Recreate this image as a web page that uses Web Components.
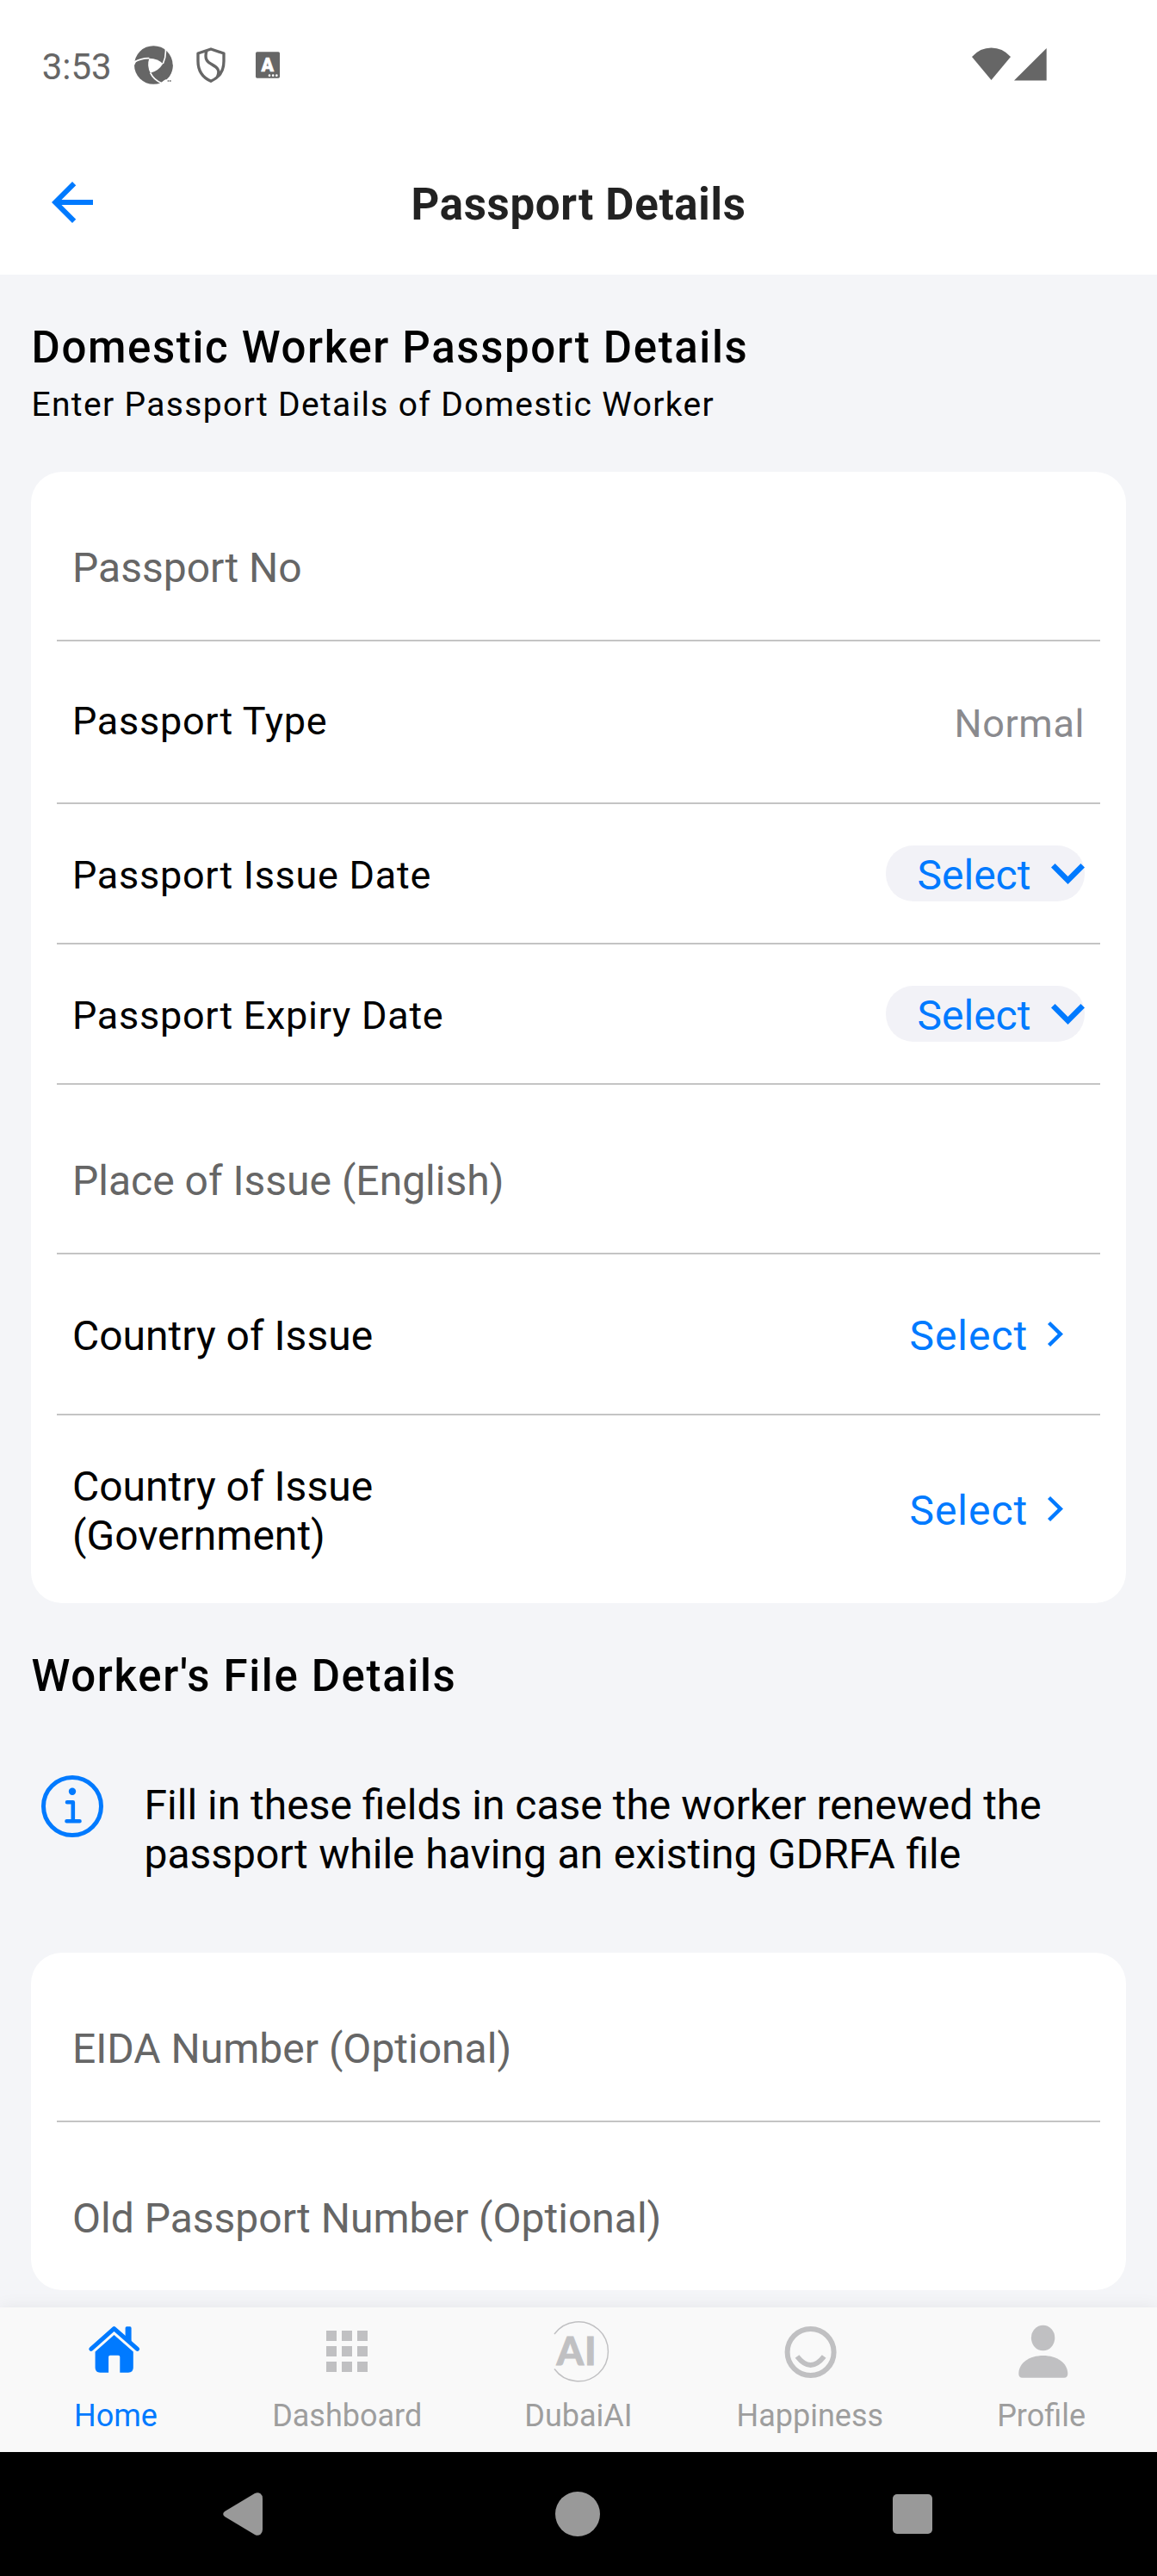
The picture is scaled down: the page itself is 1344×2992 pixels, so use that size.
<!DOCTYPE html>
<html lang="en">
<head>
<meta charset="utf-8">
<title>Passport Details</title>
<style>
html,body{margin:0;padding:0}
body{width:1344px;height:2992px;overflow:hidden;background:#f4f5f8;font-family:Roboto,"Noto Sans",sans-serif;color:#000}
</style>
</head>
<body>
<passport-app></passport-app>
<script>
const define = (name, html) => {
  const t = document.createElement('template');
  t.innerHTML = html;
  customElements.define(name, class extends HTMLElement {
    constructor() {
      super();
      this.attachShadow({mode: 'open'}).append(t.content.cloneNode(true));
    }
  });
};

/* Android status bar */
define('status-bar', `
<style>
:host{display:flex;align-items:flex-start;height:150px;background:#fff;color:#666;box-sizing:border-box;padding-left:48.7px}
.time{font-size:42px;line-height:49px;padding-top:53px;width:107.3px}
svg{display:block;flex:none;fill:#666}
.spacer{flex:1}
</style>
<span class="time">3:53</span>
<svg style="margin-top:53px" width="45" height="45" viewBox="469 159 135 135">
  <circle cx="536" cy="226.500" r="67"/>
  <path d="M566 159 L606 159 L606 184 L581 174Z M469 214 L478 209 L466 234Z M552 296 L574 279 L606 260 L606 296Z" fill="#fff"/>
  <path d="M603 226A67 67 0 0 1 582 277L570 277L560 240Z"/>
  <path d="M521 203Q552 204 569 222Q553 248 525 254Q512 229 521 203Z" fill="#fff"/>
  <path d="M569 222Q582 194 577 160M521 203Q493 202 469 217M525 254Q537 279 566 291" fill="none" stroke="#fff" stroke-width="5"/>
  <path d="M585 280h5v4h-5zM592 280h5v4h-5z"/>
</svg>
<svg style="margin:55px 0 0 27px" width="34" height="41" viewBox="684 164 102 123">
  <path d="M735 170L690 185V212C690 250 708 270 735 282C762 270 780 250 780 212V185ZM720 176C714 196 716 208 728 217C748 231 772 236 757 268" fill="none" stroke="#666" stroke-width="10" stroke-linejoin="round"/>
</svg>
<svg style="margin:60px 0 0 35px" width="28" height="31" viewBox="891 180 84 93">
  <rect x="891" y="181" width="84" height="91" rx="5"/>
  <text x="932.500" y="249" text-anchor="middle" font-family="Roboto" font-weight="900" font-size="64" fill="#fff" stroke="#fff" stroke-width="2" stroke-linejoin="round">A</text>
  <circle cx="939" cy="263" r="4" fill="#fff"/><circle cx="951.500" cy="263" r="4" fill="#fff"/><circle cx="964" cy="263" r="4" fill="#fff"/>
</svg>
<span class="spacer"></span>
<svg style="margin:55px 4px 0 0" width="45" height="38" viewBox="0 0 45 38"><path d="M0 11Q9.500 .6 22.500 .6T45 11L22.500 38Z"/></svg>
<svg style="margin:56px 128.300px 0 0" width="37.700" height="37.500" viewBox="0 0 37.700 37.500"><path d="M37.700 0V37.500H0Z"/></svg>
`);

/* Screen header with back arrow */
define('app-header', `
<style>
:host{display:grid;grid-template-columns:168px 1fr 168px;height:169px;background:#fff}
svg{margin:61px 0 0 60px;display:block}
h1{margin:0;padding-top:58px;text-align:center;font-size:51px;line-height:59px;font-weight:700;letter-spacing:.7px;color:#222}
</style>
<svg width="48" height="48" viewBox="4 4 16 16"><path fill="#007aff" d="M20 11H7.830l5.590-5.590L12 4l-8 8 8 8 1.410-1.410L7.830 13H20v-2z"/></svg>
<h1><slot></slot></h1>
`);

define('form-card', `
<style>
:host{display:block;margin:0 36px;background:#fff;border-radius:36px}
::slotted(:not(:last-child)){--line:2px}
</style><slot></slot>
`);

/* One row: --h row height, --lt offset of label, --rt offset of the value */
define('form-row', `
<style>
:host{display:block;padding:0 30px}
.row{display:flex;justify-content:space-between;align-items:flex-start;height:var(--h);padding:0 18px;box-sizing:border-box;overflow:hidden}
hr{margin:0;border:0;height:var(--line,0px);background:#c4c4c4}
.label{padding-top:var(--lt);font-size:48px;line-height:57px}
:host([kind=hint]) .label{color:#666}
:host([kind=small]) .label{font-size:45px;line-height:53px;letter-spacing:.72px}
::slotted([slot=value]){margin-top:var(--rt)!important}
</style>
<div class="row"><div class="label"><slot></slot></div><slot name="value"></slot></div><hr>
`);

define('plain-value', `
<style>:host{display:block;font-size:45px;line-height:53px;letter-spacing:.6px;color:#8a8a8e}</style><slot></slot>
`);

define('date-pill', `
<style>
:host{display:flex;align-items:flex-start;width:231px;height:65px;border-radius:32px;background:#f2f2f7;color:#007aff;font-size:48px;line-height:57px;box-sizing:border-box;padding:6px 0 0 36.500px}
span{width:155.500px}
svg{margin-top:15px;flex:none}
</style>
<span><slot></slot></span><svg width="39" height="24" viewBox="0 0 39 24"><path d="M4.600 0L19.500 14.900L34.400 0L39 4.600L19.500 24L0 4.600Z" fill="#007aff"/></svg>
`);

define('nav-select', `
<style>
:host{display:flex;align-items:flex-start;color:#007aff;font-size:48px;line-height:57px;letter-spacing:.95px;padding-right:25px}
span{width:160.500px}
svg{margin-top:12px;flex:none}
</style>
<span><slot></slot></span><svg width="18" height="29" viewBox="0 0 18 29"><path d="M3.100 0L18 14.500L3.100 29L0 26L11.700 14.500L0 3Z" fill="#007aff"/></svg>
`);

define('section-title', `
<style>:host{display:block;padding-left:36.500px;font-size:51px;line-height:59px;font-weight:500;letter-spacing:1.630px}</style><slot></slot>
`);

define('section-note', `
<style>:host{display:block;padding-left:36.500px;font-size:39px;line-height:46px;letter-spacing:1.330px}</style><slot></slot>
`);

define('info-note', `
<style>
:host{display:flex;align-items:flex-start;padding:0 48px}
svg{flex:none;display:block}
p{margin:6px 0 0 47.500px;font-size:48px;line-height:57px;white-space:nowrap}
</style>
<svg width="72" height="72" viewBox="0 0 72 72" fill="none" stroke="#007aff" stroke-linecap="round" stroke-linejoin="round">
<circle cx="36" cy="36" r="33.500" stroke-width="5"/><circle cx="36" cy="18.700" r="4.200" fill="#007aff" stroke="none"/>
<path d="M30 31.300H36.800V53.300M29.500 53.300H44.500" stroke-width="4.600"/></svg>
<p><slot></slot></p>
`);

define('tab-item', `
<style>
:host{display:flex;flex-direction:column;align-items:center;flex:1;color:#9e9e9e;font-size:36px;line-height:42px}
:host([active]){color:#007aff}
</style>
<slot name="icon"></slot><span><slot></slot></span>
`);

define('tab-bar', `
<style>
:host{display:flex;height:168px;background:#f9f9f9;box-shadow:0 0 18px rgba(0,0,0,.07)}
svg{display:block;fill:#c0c0c2;overflow:visible}
</style>
<tab-item active><svg slot="icon" width="80" height="105" viewBox="0 0 80 105" style="fill:#007aff">
  <path d="M11.800 48.300L38.500 24.700L65.600 48.300" fill="none" stroke="#007aff" stroke-width="5" stroke-linecap="round" stroke-linejoin="round"/>
  <path d="M51.600 24Q51.600 22.300 53.300 22.300H57Q58.600 22.300 58.600 24V43L51.600 37Z"/>
  <path d="M38.500 32L60.800 51.500V70Q60.800 75.700 55 75.700H45.300V57.500Q45.300 55.700 43.500 55.700H34Q32.100 55.700 32.100 57.500V75.700H22.300Q16.600 75.700 16.600 70V51.500Z"/>
</svg>Home</tab-item>
<tab-item><svg slot="icon" width="80" height="105" viewBox="0 0 80 105"><path d="M16 27h12v12h-12zM34 27h12v12h-12zM52 27h12v12h-12zM16 45h12v12h-12zM34 45h12v12h-12zM52 45h12v12h-12zM16 63h12v12h-12zM34 63h12v12h-12zM52 63h12v12h-12z"/></svg>Dashboard</tab-item>
<tab-item><svg slot="icon" width="80" height="105" viewBox="0 0 80 105">
  <path d="M12 31A34.500 34.500 0 1 1 12 71.500" fill="none" stroke="#c0c0c2" stroke-width="1.400"/>
  <text x="14.500" y="66.500" font-family="Lato" font-weight="900" font-size="45" letter-spacing="1" stroke="#c0c0c2" stroke-width=".8">AI</text></svg>DubaiAI</tab-item>
<tab-item><svg slot="icon" width="80" height="105" viewBox="0 0 80 105"><g fill="none" stroke="#c0c0c2" stroke-width="6"><circle cx="40.600" cy="52" r="27"/><path d="M25 57Q40.600 77 56.200 57"/></g></svg>Happiness</tab-item>
<tab-item><svg slot="icon" width="80" height="105" viewBox="0 0 80 105"><ellipse cx="41.600" cy="35.500" rx="13.700" ry="14.700"/><path d="M13.300 77C13.300 64.500 26 56 41.700 56S70.300 64.500 70.300 77Q70.300 81.800 66 81.800H17.500Q13.300 81.800 13.300 77Z"/></svg>Profile</tab-item>
`);

define('system-nav', `
<style>:host{display:flex;justify-content:space-between;align-items:center;height:144px;background:#000;box-sizing:border-box;padding:0 261px 0 259px}svg{fill:#999}</style>
<svg width="46" height="50" viewBox="0 0 46 50"><path d="M2 22L37 1Q40.500-.8 43.500 1.200Q46 3 46 7V43Q46 47 43.500 48.800Q40.500 50.800 37 49L2 28Q-1.600 25 2 22Z"/></svg>
<svg width="52" height="52" viewBox="0 0 52 52"><circle cx="26" cy="26" r="26"/></svg>
<svg width="46" height="46" viewBox="0 0 46 46"><rect width="46" height="46" rx="5"/></svg>
`);

define('passport-app', `
<style>
:host{display:flex;flex-direction:column;width:1344px;height:2992px}
main{flex:1;min-height:0;overflow:hidden;background:#f4f5f8;padding-top:55px}
section-note{margin-top:14px;margin-bottom:55px}
.second{margin-top:55px;margin-bottom:86px}
info-note{margin-bottom:86px;height:120px}
.wide{word-spacing:.78px}
tab-bar{position:relative}
</style>
<status-bar></status-bar>
<app-header>Passport Details</app-header>
<main>
  <section-title>Domestic Worker Passport Details</section-title>
  <section-note>Enter Passport Details of Domestic Worker</section-note>
  <form-card>
    <form-row kind="hint" style="--h:195px;--lt:83px">Passport No</form-row>
    <form-row kind="small" style="--h:187px;--lt:66px;--rt:69px">Passport Type<plain-value slot="value">Normal</plain-value></form-row>
    <form-row kind="small" style="--h:161px;--lt:56px;--rt:48px">Passport Issue Date<date-pill slot="value">Select</date-pill></form-row>
    <form-row kind="small" style="--h:161px;--lt:56px;--rt:48px">Passport Expiry Date<date-pill slot="value">Select</date-pill></form-row>
    <form-row kind="hint" style="--h:195px;--lt:83px">Place of Issue (English)</form-row>
    <form-row style="--h:185px;--lt:66px;--rt:66px">Country of Issue<nav-select slot="value">Select</nav-select></form-row>
    <form-row style="--h:218px;--lt:54px;--rt:82px">Country of Issue<br>(Government)<nav-select slot="value">Select</nav-select></form-row>
  </form-card>
  <section-title class="second">Worker's File Details</section-title>
  <info-note>Fill in these fields in case the worker renewed the<br><span class="wide">passport while having an existing GDRFA file</span></info-note>
  <form-card>
    <form-row kind="hint" style="--h:195px;--lt:83px">EIDA Number (Optional)</form-row>
    <form-row kind="hint" style="--h:195px;--lt:83px">Old Passport Number (Optional)</form-row>
  </form-card>
</main>
<tab-bar></tab-bar>
<system-nav></system-nav>
`);
</script>
</body>
</html>
